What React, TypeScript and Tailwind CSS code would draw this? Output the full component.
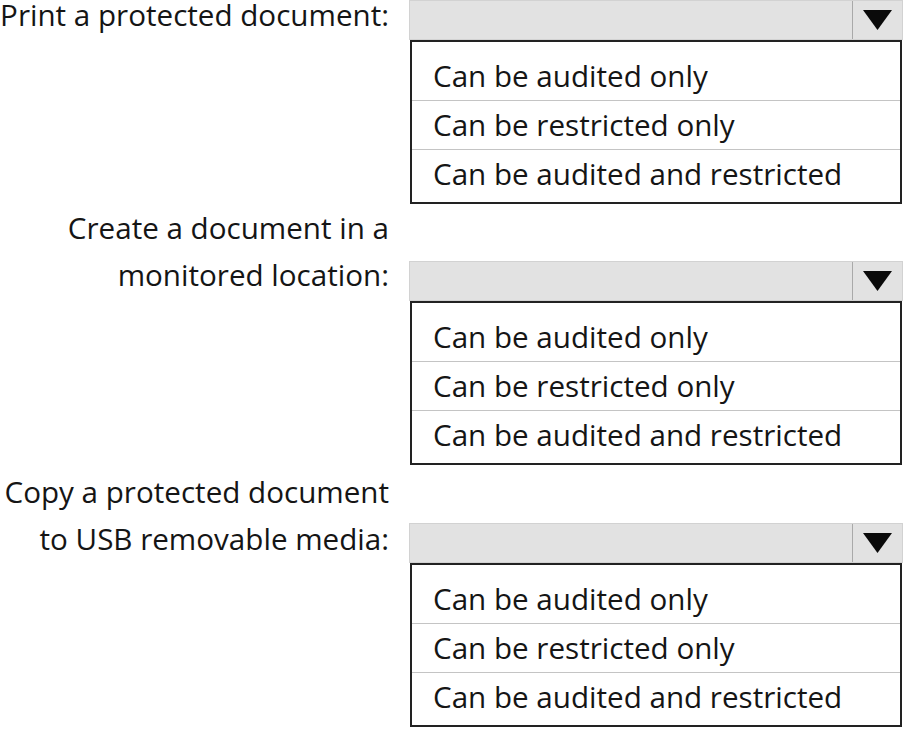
import React from 'react';

const options = ['Can be audited only', 'Can be restricted only', 'Can be audited and restricted'];

type Props = {
  lines: string[];
  labelClass: string;
  sectionClass?: string;
};

const Arrow: React.FC = () => (
  <svg width="29" height="20" viewBox="0 0 29 20" className="block">
    <polygon points="0,0 29,0 14.5,20" fill="#0a0a0a" />
  </svg>
);

const Question: React.FC<Props> = ({ lines, labelClass, sectionClass = '' }) => {
  return (
    <div className={`flex flex-col ${sectionClass}`}>
      <div className="flex items-end">
        <div className={`w-[409px] shrink-0 pr-[20px] text-right whitespace-nowrap ${labelClass}`}>
          {lines.map((l) => (
            <div key={l}>{l}</div>
          ))}
        </div>
        <div className="flex h-[40px] w-[494px] border border-[#d2d2d2] bg-[#e2e2e2]">
          <div className="flex-1"></div>
          <div className="flex w-[50px] items-center justify-center border-l border-[#a9a9a9]">
            <Arrow />
          </div>
        </div>
      </div>
      <div className="flex">
        <div className="w-[410px] shrink-0"></div>
        <div className="flex h-[164px] w-[492px] flex-col border-2 border-[#222] bg-white pt-[10px]">
          {options.map((o, i) => (
            <div
              key={o}
              className={`pl-[21px] whitespace-nowrap ${i < 2 ? 'h-[49px] border-b border-[#c4c4c4] leading-[48px]' : 'h-[48px] leading-[48px]'}`}
            >
              {o}
            </div>
          ))}
        </div>
      </div>
    </div>
  );
};

const App: React.FC = () => {
  return (
    <div
      className="h-[729px] w-[903px] overflow-hidden bg-white text-[29.6px] text-[#151515]"
      style={{ fontFamily: '"Open Sans", "Noto Sans", sans-serif' }}
    >
      <Question lines={['Print a protected document:']} labelClass="leading-[30px] pb-[10px]" />
      <Question lines={['Create a document in a', 'monitored location:']} labelClass="leading-[47px] pb-[3px]" />
      <Question
        lines={['Copy a protected document', 'to USB removable media:']}
        labelClass="leading-[47px] pb-[1px]"
        sectionClass="pt-[3px]"
      />
    </div>
  );
};

export default App;
